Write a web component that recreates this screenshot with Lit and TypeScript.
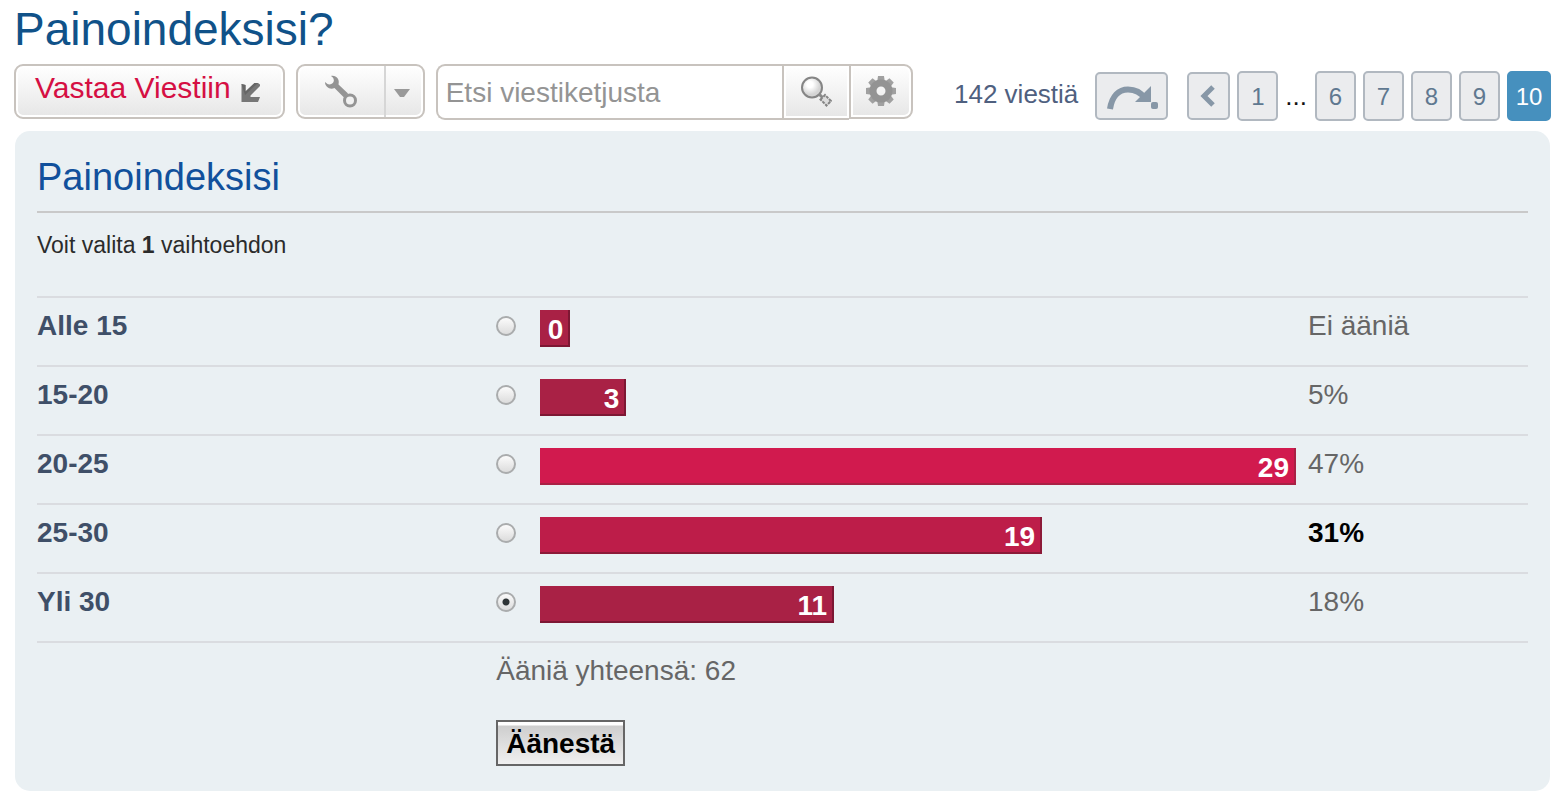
import { LitElement, html, css, svg } from "lit";
import { customElement, state } from "lit/decorators.js";
import { classMap } from "lit/directives/class-map.js";

interface Choice {
  id: string;
  label: string;
  votes: number;
  share: string;
  tone: "low" | "mid" | "top";
  mine?: boolean;
}

const CHOICES: Choice[] = [
  { id: "a", label: "Alle 15", votes: 0, share: "Ei ääniä", tone: "low" },
  { id: "b", label: "15-20", votes: 3, share: "5%", tone: "low" },
  { id: "c", label: "20-25", votes: 29, share: "47%", tone: "top" },
  { id: "d", label: "25-30", votes: 19, share: "31%", tone: "mid", mine: true },
  { id: "e", label: "Yli 30", votes: 11, share: "18%", tone: "low" },
];

const TOTAL = CHOICES.reduce((sum, c) => sum + c.votes, 0);

// Share of the bar column taken by one vote; full bars are capped by max-width.
const PERCENT_PER_VOTE = 3.44;

const teeth = [0, 45, 90, 135, 180, 225, 270, 315];

const icons = {
  reply: html`<svg width="20" height="20" viewBox="0 0 20 20" aria-hidden="true">
    <path d="M0.500 2L4.500 3v6.500L13.500 1h3.500l2 1.500v1.500L9.500 13.500V15H19l-2 5H0.500z" fill="#777" />
    <path d="M0.500 2L4.500 3v6.500L13.500 1h3.500L4 13z" fill="#666" />
  </svg>`,
  wrench: html`<svg width="34" height="34" viewBox="0 0 34 34" aria-hidden="true">
    <path d="M7 1c5-1 9 3 7.500 8.500L24 18.500l-4 4L10.500 13C6 15 1 12 1 7l2.500 2c2 1 5 0 6-2 1-2 0-4.500-2.500-6z" fill="#949494" />
    <circle cx="26" cy="25.500" r="5.500" fill="#f1f1f1" stroke="#949494" stroke-width="3" />
  </svg>`,
  caret: html`<svg width="16" height="8" viewBox="0 0 16 8" aria-hidden="true">
    <path d="M0 0h16L10 8H6z" fill="#999" />
  </svg>`,
  search: html`<svg width="32" height="32" viewBox="0 0 32 32" aria-hidden="true">
    <defs>
      <radialGradient id="lens" cx="40%" cy="35%">
        <stop offset="0.3" stop-color="#fff" />
        <stop offset="1" stop-color="#d4d4d4" />
      </radialGradient>
    </defs>
    <circle cx="12" cy="11.500" r="10" fill="url(#lens)" stroke="#858585" stroke-width="2" />
    <path d="M19 18l4 4" stroke="#8a8a8a" stroke-width="3" />
    <path d="M20.500 23.500l4.500-4.500 6 6-4.500 4.500z" fill="#ddd" stroke="#858585" stroke-width="2" stroke-dasharray="3 1" />
  </svg>`,
  gear: html`<svg width="32" height="32" viewBox="-16 -15 32 32" aria-hidden="true">
    ${teeth.map((a) => svg`<path d="M-4-8l1-7h6l1 7z" fill="#a0a0a0" transform="rotate(${a})" />`)}
    <circle r="8" fill="none" stroke="#939393" stroke-width="7" />
  </svg>`,
  jump: html`<svg width="52" height="26" viewBox="0 0 52 26" aria-hidden="true">
    <path d="M4 25C6 12 13 5.500 22 5.500c8 0 13 3 17 9" fill="none" stroke="#8797a7" stroke-width="6" />
    <path d="M45 2v16H29z" fill="#8797a7" />
    <rect x="45" y="18" width="7" height="7" rx="2" fill="#8797a7" />
  </svg>`,
  back: html`<svg width="16" height="22" viewBox="0 0 16 22" aria-hidden="true">
    <path d="M13 2L4 11l9 9" fill="none" stroke="#8797a7" stroke-width="5" />
  </svg>`,
};

@customElement("app-root")
export class AppRoot extends LitElement {
  @state() private picked = "e";

  static styles = css`
    :host {
      display: block;
      padding: 0 15px 12px 14px;
      background: #fff;
      font-family: "Liberation Sans", Arial, sans-serif;
      font-size: 28px;
      line-height: 32px;
      color: #666;
    }
    * {
      box-sizing: border-box;
    }
    svg {
      display: block;
      flex: none;
    }
    a {
      text-decoration: none;
    }
    button {
      font: inherit;
      margin: 0;
      cursor: pointer;
    }
    h1 {
      margin: 0;
      padding: 1px 0 7px;
      font-size: 46px;
      line-height: 56px;
      font-weight: 400;
      color: #105289;
    }
    .toolbar {
      display: flex;
      align-items: flex-start;
      gap: 11px;
    }
    .glossy {
      display: flex;
      align-items: center;
      justify-content: center;
      height: 55px;
      border: 2px solid #c8c3be;
      background: linear-gradient(#fff, #e6e6e6);
      box-shadow: inset 0 0 0 2px #fff;
    }
    .reply {
      gap: 10px;
      padding: 0 22px 0 19px;
      border-radius: 9px;
      font-size: 30px;
      color: #d50f43;
    }
    .reply-text {
      padding-bottom: 8px;
    }
    .tools {
      display: flex;
      height: 55px;
      border: 2px solid #c8c3be;
      border-radius: 9px;
      background: linear-gradient(#fff, #e6e6e6);
      box-shadow: inset 0 0 0 2px #fff;
    }
    .tool {
      display: flex;
      align-items: center;
      justify-content: center;
      padding: 0;
      border: 0;
      background: none;
    }
    .wrench {
      width: 86px;
    }
    .caret {
      width: 39px;
      padding: 3px 5px 0 0;
      border-left: 2px solid #d6d6d6;
    }
    .search {
      display: flex;
      flex: 0 1 477px;
      min-width: 0;
    }
    .search-box {
      flex: 1;
      min-width: 0;
      height: 56px;
      margin: 0;
      padding: 2px 8px 0;
      border: 2px solid #c8c3be;
      border-right: 0;
      border-radius: 9px 0 0 9px;
      background: #fff;
      font: inherit;
      color: #333;
    }
    .search-box::placeholder {
      color: #949494;
      opacity: 1;
    }
    .find {
      width: 67px;
      height: 56px;
      border-right: 0;
    }
    .options {
      width: 64px;
      border-radius: 0 9px 9px 0;
    }
    .pager {
      display: flex;
      align-items: center;
      gap: 7px;
      margin-left: auto;
      padding-top: 7px;
      font-size: 24px;
    }
    .count {
      padding-right: 10px;
      padding-bottom: 4px;
      font-size: 26px;
      color: #4f607f;
    }
    .page {
      display: flex;
      align-items: center;
      justify-content: center;
      width: 41px;
      height: 50px;
      padding-top: 2px;
      border: 2px solid #b1b8c0;
      border-radius: 5px;
      background: #ebecee;
      color: #5f7890;
    }
    .jump {
      width: 73px;
      height: 48px;
      margin-right: 12px;
    }
    .prev {
      width: 43px;
      height: 48px;
      padding: 0 2px 0 0;
    }
    .current {
      width: 44px;
      border-color: #4690be;
      background: #4690be;
      color: #fff;
    }
    .dots {
      padding-right: 1px;
      color: #111;
      font-size: 26px;
    }
    .poll {
      margin: 10px 1px 0;
      padding: 23px 22px 25px;
      border-radius: 15px;
      background: #eaf0f3;
    }
    h2 {
      margin: 0;
      padding-bottom: 10px;
      border-bottom: 2px solid #c9c9c9;
      font-size: 38px;
      line-height: 47px;
      font-weight: 400;
      color: #11509c;
    }
    .hint {
      margin: 0;
      padding: 16px 0 35px;
      font-size: 23px;
      color: #2b2b2b;
    }
    table {
      width: 100%;
      table-layout: fixed;
      border-collapse: separate;
      border-spacing: 0;
    }
    .col-label {
      width: 30.8%;
    }
    .col-radio {
      width: 44px;
    }
    .col-share {
      width: 220px;
    }
    th,
    td {
      padding: 0;
      text-align: left;
      vertical-align: top;
    }
    .choice th,
    .choice td {
      height: 69px;
      padding-top: 12px;
      border-top: 2px solid #dadce0;
    }
    .choice th {
      color: #3f4f68;
    }
    .choice .bar-cell {
      padding-right: 12px;
    }
    .choice .radio-cell {
      padding-top: 18px;
    }
    .radio {
      display: block;
      appearance: none;
      width: 20px;
      height: 20px;
      margin: 0;
      border: 2px solid #aaacad;
      border-radius: 50%;
      background: linear-gradient(#fbfbfb, #dcdcdc);
    }
    .radio:checked {
      background: radial-gradient(circle, #2e3436 3px, transparent 4px),
        linear-gradient(#fbfbfb, #dcdcdc);
    }
    .bar {
      height: 37px;
      min-width: 30px;
      max-width: 100%;
      padding: 4px 5px 0 0;
      border: 0 solid #7d1733;
      border-width: 0 2px 2px 0;
      background: #a92145;
      color: #fff;
      font-weight: 700;
      text-align: right;
    }
    .mid {
      background: #bd1d49;
      border-color: #8c1a38;
    }
    .top {
      background: #d11a4e;
      border-color: #a92145;
    }
    .mine {
      color: #000;
      font-weight: 700;
    }
    tfoot td {
      padding-top: 12px;
      border-top: 2px solid #dadce0;
    }
    tfoot .send {
      padding-top: 33px;
      border-top: 0;
    }
    .vote {
      display: block;
      height: 46px;
      padding: 1px 8px 0;
      border: 2px solid #666;
      background: linear-gradient(#fff 3px, #cecece 4px, #f0f0f0);
      font-weight: 700;
      color: #000;
    }
  `;

  private row(c: Choice) {
    const width = `calc(${c.votes * PERCENT_PER_VOTE}% + 8px)`;
    return html`<tr class="choice">
      <th scope="row"><label for=${c.id}>${c.label}</label></th>
      <td class="radio-cell">
        <input class="radio" type="radio" name="choice" id=${c.id}
          .checked=${this.picked === c.id} @change=${() => (this.picked = c.id)} />
      </td>
      <td class="bar-cell"><div class="bar ${c.tone}" style="width: ${width}">${c.votes}</div></td>
      <td class=${classMap({ mine: !!c.mine })}>${c.share}</td>
    </tr>`;
  }

  render() {
    return html`
      <h1>Painoindeksisi?</h1>
      <div class="toolbar">
        <a class="glossy reply" href="#reply"><span class="reply-text">Vastaa Viestiin</span>${icons.reply}</a>
        <div class="tools">
          <button class="tool wrench" type="button" aria-label="Työkalut">${icons.wrench}</button>
          <button class="tool caret" type="button" aria-label="Lisää työkaluja">${icons.caret}</button>
        </div>
        <form class="search" role="search" @submit=${(e: Event) => e.preventDefault()}>
          <input class="search-box" type="text" aria-label="Etsi viestiketjusta" placeholder="Etsi viestiketjusta" />
          <button class="glossy find" type="submit" aria-label="Etsi">${icons.search}</button>
          <button class="glossy options" type="button" aria-label="Tarkennettu haku">${icons.gear}</button>
        </form>
        <nav class="pager" aria-label="Sivut">
          <span class="count">142 viestiä</span>
          <a class="page jump" href="#jump" aria-label="Siirry sivulle">${icons.jump}</a>
          <a class="page prev" href="#prev" aria-label="Edellinen">${icons.back}</a>
          <a class="page" href="#1">1</a>
          <span class="dots">...</span>
          ${[6, 7, 8, 9].map((n) => html`<a class="page" href="#${n}">${n}</a>`)}
          <a class="page current" href="#10" aria-current="page">10</a>
        </nav>
      </div>
      <form class="poll" @submit=${(e: Event) => e.preventDefault()}>
        <h2>Painoindeksisi</h2>
        <p class="hint">Voit valita <b>1</b> vaihtoehdon</p>
        <table>
          <colgroup>
            <col class="col-label" /><col class="col-radio" /><col /><col class="col-share" />
          </colgroup>
          <tbody>${CHOICES.map((c) => this.row(c))}</tbody>
          <tfoot>
            <tr><td></td><td colspan="3">Ääniä yhteensä: ${TOTAL}</td></tr>
            <tr><td class="send"></td><td class="send" colspan="3"><button class="vote" type="submit">Äänestä</button></td></tr>
          </tfoot>
        </table>
      </form>
    `;
  }
}
